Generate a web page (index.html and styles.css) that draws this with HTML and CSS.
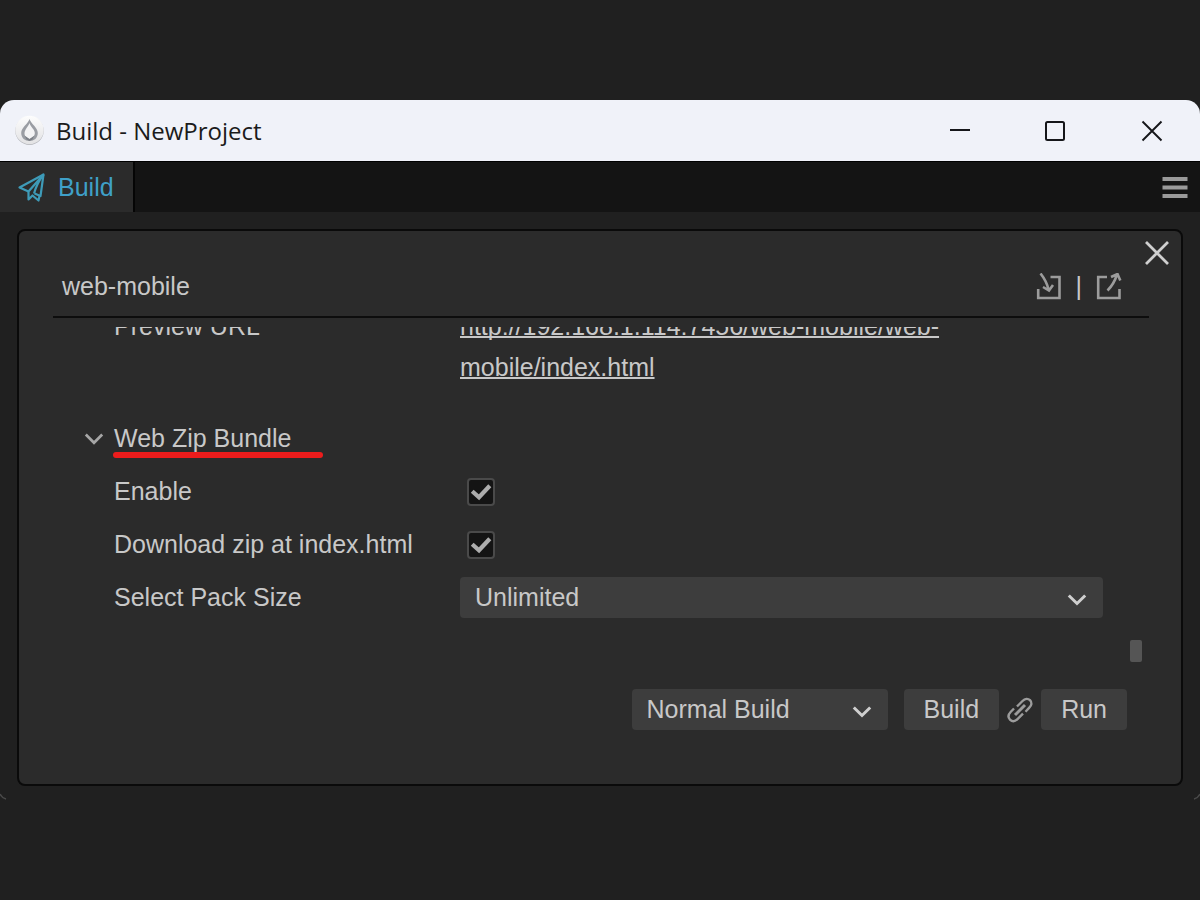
FILE: index.html
```html
<!DOCTYPE html>
<html lang="en">
<head>
<meta charset="utf-8">
<meta name="viewport" content="width=device-width, initial-scale=1">
<title>Build - NewProject</title>
<link rel="stylesheet" href="styles.css">
</head>
<body>
<div class="window">
  <header class="titlebar">
    <svg class="app-icon" width="32" height="32" viewBox="0 0 32 32" aria-hidden="true">
      <defs>
        <linearGradient id="disc" x1="0" y1="0" x2="0" y2="1"><stop offset="0" stop-color="#fdfdfd"/><stop offset="1" stop-color="#e2e2e4"/></linearGradient>
      </defs>
      <circle cx="15.500" cy="15.800" r="14.200" fill="#b4b6bb"/>
      <circle cx="15.500" cy="15" r="14.200" fill="url(#disc)"/>
      <path d="M15.500 4C14 9 7.200 12.600 7.200 18C7.200 23 11 26 15.500 26S23.800 23 23.800 18C23.800 12.600 17 9 15.500 4Z" fill="#9a9da3"/>
      <path d="M15.500 8C14.500 11.500 10.500 14.500 10.500 18.500C10.500 21.500 12.800 23.500 15.500 24C18.200 23.500 20.800 21.500 20.800 18C20.800 14.400 16.500 12 15.500 8Z" fill="#f3f3f4"/>
      <path d="M10.500 20.500L15.500 24L20.500 20.500L18.500 24.500L15.500 26L12.500 24.500Z" fill="#7c8087"/>
    </svg>
    <h1 class="title">Build - NewProject</h1>
    <div class="window-buttons">
      <button type="button" aria-label="Minimize"><svg width="24" height="24" viewBox="0 0 24 24"><path d="M2 11h20" stroke="#15161a" stroke-width="2"/></svg></button>
      <button type="button" aria-label="Maximize"><svg width="24" height="24" viewBox="0 0 24 24"><rect x="2" y="3" width="18" height="18" rx="1.500" fill="none" stroke="#15161a" stroke-width="2"/></svg></button>
      <button type="button" aria-label="Close window"><svg width="24" height="24" viewBox="0 0 24 24"><path d="M2.500 2.500l19 19M21.500 2.500l-19 19" stroke="#15161a" stroke-width="1.900"/></svg></button>
    </div>
  </header>

  <nav class="tabs">
    <button type="button" class="tab">
      <svg width="28" height="30" viewBox="0 0 28 30" fill="none" stroke="#3e9bb8" stroke-width="2.200" stroke-linejoin="round" aria-hidden="true">
        <path d="M10.500 19.500L1.500 15.500L25.500 2.500L22.500 24L16.500 21.500"/>
        <path d="M25.500 2.500L10.500 19.500V27.500L14.500 23.500L20.500 28.500L21.500 24"/>
        <path d="M25.500 2.500Q19 11 16 21.500"/>
      </svg>
      Build
    </button>
    <button type="button" class="menu" aria-label="Menu">
      <svg width="26" height="24" viewBox="0 0 26 24"><path d="M.5 4h25M.5 12.500h25M.5 21h25" stroke="#9a9a9a" stroke-width="4"/></svg>
    </button>
  </nav>

  <main class="content">
    <section class="card">
      <button type="button" class="close" aria-label="Close">
        <svg width="26" height="26" viewBox="0 0 26 26"><path d="M2 2l22 22M24 2L2 24" stroke="#cfcfcf" stroke-width="2.800"/></svg>
      </button>
      <div class="card-head">
        <h2 class="name">web-mobile</h2>
        <div class="transfer">
          <button type="button" aria-label="Import">
            <svg width="26" height="28" viewBox="0 0 26 28" fill="none" stroke="#9c9c9c" stroke-width="2.600"><path d="M14.500 4H23.500V25H2.200V16"/><path d="M4.500 .5Q10.500 8 12.500 16.500M7 14L13 17.500L17 12"/></svg>
          </button>
          <span class="bar">|</span>
          <button type="button" aria-label="Export">
            <svg width="26" height="28" viewBox="0 0 26 28" fill="none" stroke="#9c9c9c" stroke-width="2.600"><path d="M11 4H2.200V25H23.500V16"/><path d="M11.500 17.500Q18 11 20.800 2M15 4L21.500 1L24.300 7.500"/></svg>
          </button>
        </div>
      </div>

      <div class="scroller">
        <div class="row preview">
          <span class="label">Preview URL</span>
          <a class="link" href="#">http://192.168.1.114:7456/web-mobile/web-mobile/index.html</a>
        </div>
        <button type="button" class="group">
          <svg width="20" height="14" viewBox="0 0 20 14" aria-hidden="true"><path d="M1.800 2.500L10 10.800L18.200 2.500" fill="none" stroke="#a6a6a6" stroke-width="2.700"/></svg>
          <span class="group-name">Web Zip Bundle</span>
        </button>
        <div class="row">
          <label class="label" for="enable">Enable</label>
          <span class="check">
            <input type="checkbox" id="enable" checked>
            <svg width="22" height="18" viewBox="0 0 22 18" aria-hidden="true"><path d="M2.200 8.200L9 14.300L19.800 2.800" fill="none" stroke="#adadad" stroke-width="4.200"/></svg>
          </span>
        </div>
        <div class="row">
          <label class="label" for="download">Download zip at index.html</label>
          <span class="check">
            <input type="checkbox" id="download" checked>
            <svg width="22" height="18" viewBox="0 0 22 18" aria-hidden="true"><path d="M2.200 8.200L9 14.300L19.800 2.800" fill="none" stroke="#adadad" stroke-width="4.200"/></svg>
          </span>
        </div>
        <div class="row">
          <label class="label" for="pack">Select Pack Size</label>
          <span class="select">
            <select id="pack"><option>Unlimited</option></select>
            <svg width="20" height="14" viewBox="0 0 20 14" aria-hidden="true"><path d="M1.800 2.500L10 10.500L18.200 2.500" fill="none" stroke="#cfcfcf" stroke-width="3"/></svg>
          </span>
        </div>
        <span class="thumb"></span>
      </div>

      <footer class="actions">
        <span class="select mode">
          <select aria-label="Build mode"><option>Normal Build</option></select>
          <svg width="20" height="14" viewBox="0 0 20 14" aria-hidden="true"><path d="M1.800 2.500L10 10.500L18.200 2.500" fill="none" stroke="#cfcfcf" stroke-width="3"/></svg>
        </span>
        <button type="button" class="btn">Build</button>
        <svg class="chain" width="26" height="26" viewBox="0 0 26 26" fill="none" stroke="#9c9c9c" stroke-width="2.400" aria-hidden="true">
          <path d="M8 18L18 8" stroke-width="3"/>
          <path d="M10 9.500L15.500 4C18 1.500 21 1.300 23 3.200C25.200 5.400 24.800 8.200 22.300 10.700L18.500 14.800"/>
          <path d="M7 11.500L3.600 15C1.200 17.500 1 20.500 3 22.600C5.200 24.800 8 24.600 10.500 22.200L16 16.700"/>
        </svg>
        <button type="button" class="btn">Run</button>
      </footer>
    </section>
  </main>
  <svg class="corner left" width="8" height="8" viewBox="0 0 8 8" aria-hidden="true"><path d="M0 2Q2 6 6 7" fill="none" stroke="#4a4a4a" stroke-width="1.500"/></svg>
  <svg class="corner right" width="8" height="8" viewBox="0 0 8 8" aria-hidden="true"><path d="M8 2Q6 6 2 7" fill="none" stroke="#4a4a4a" stroke-width="1.500"/></svg>
</div>
</body>
</html>
```

FILE: styles.css
```css
* {
  box-sizing: border-box;
}

body {
  margin: 0;
  min-height: 100vh;
  display: flex;
  flex-direction: column;
  justify-content: center;
  background: #202020;
  color: #c8c8c8;
  font: 25px/41px "Liberation Sans", Arial, sans-serif;
}

button,
select {
  margin: 0;
  padding: 0;
  border: 0;
  background: none;
  color: inherit;
  font: inherit;
}

svg {
  display: block;
  flex: none;
}

.window {
  position: relative;
}

.titlebar {
  display: flex;
  align-items: center;
  height: 62px;
  padding-left: 14px;
  background: #f0f2f9;
  border-bottom: 1px solid #000000;
  border-radius: 14px 14px 0 0;
}

.title {
  flex: 1;
  margin: 0 0 0 10px;
  color: #1b1b1b;
  font: 24px/32px "Open Sans", "Noto Sans", sans-serif;
}

.window-buttons {
  display: flex;
}

.window-buttons button {
  display: grid;
  place-items: center;
  width: 96px;
  height: 60px;
}

.tabs {
  display: flex;
  justify-content: space-between;
  height: 50px;
  padding-right: 12px;
  background: #141414;
}

.tab {
  display: flex;
  align-items: center;
  gap: 12px;
  padding: 0 19px 0 18px;
  background: #2b2b2b;
  border-right: 2px solid #050505;
  color: #3fa0c8;
}

.content {
  padding: 17px 17px 14px;
}

.card {
  position: relative;
  padding: 32px 32px 54px 34px;
  background: #2b2b2b;
  border: 2px solid #0a0a0a;
  border-radius: 8px;
}

.close {
  position: absolute;
  top: 9px;
  right: 11px;
}

.card-head {
  display: flex;
  align-items: center;
  justify-content: space-between;
  height: 55px;
  padding: 0 27px 6px 9px;
  border-bottom: 2px solid #0d0d0d;
}

.name {
  margin: 0;
  font-size: 25px;
  font-weight: 400;
}

.transfer {
  display: flex;
  align-items: center;
  gap: 14px;
}

.scroller {
  position: relative;
  display: flex;
  flex-direction: column;
  gap: 12px;
  margin-top: 9px;
  padding: 0 46px 44px 61px;
  overflow: hidden;
}

.row {
  display: grid;
  grid-template-columns: 346px 1fr;
  align-items: center;
}

.preview {
  align-items: start;
  margin: -21px 0 18px;
}

.link {
  max-width: 500px;
  color: inherit;
  text-underline-offset: 1px;
  text-decoration-thickness: 2px;
  text-decoration-skip-ink: none;
}

.group {
  display: flex;
  align-items: center;
  gap: 10px;
  margin-left: -30px;
}

.group-name {
  position: relative;
}

.group-name::after {
  content: "";
  position: absolute;
  left: -1px;
  right: -32px;
  bottom: 1px;
  height: 6px;
  border-radius: 3px;
  background: #ec1c1c;
}

.check {
  display: grid;
  place-items: center start;
  height: 41px;
  padding-left: 7px;
}

.check > * {
  grid-area: 1 / 1;
}

.check input {
  appearance: none;
  width: 28px;
  height: 28px;
  margin: 0;
  background: #141414;
  border: 2px solid #4a4a4a;
  border-radius: 4px;
}

.check svg {
  margin-left: 3px;
  pointer-events: none;
}

.select {
  display: grid;
  align-items: center;
}

.select > * {
  grid-area: 1 / 1;
}

.select select {
  appearance: none;
  width: 100%;
  height: 41px;
  padding: 0 15px;
  background: #3d3d3d;
  border-radius: 4px;
}

.select svg {
  justify-self: end;
  margin: 4px 16px 0 0;
  pointer-events: none;
}

.thumb {
  position: absolute;
  right: 7px;
  bottom: 0;
  width: 12px;
  height: 22px;
  background: #555555;
  border-radius: 2px;
}

.actions {
  display: flex;
  align-items: center;
  justify-content: flex-end;
  margin-top: 27px;
  padding-right: 22px;
}

.mode {
  width: 256px;
  margin-right: 16px;
}

.btn {
  height: 41px;
  padding: 0 20px;
  background: #3d3d3d;
  border-radius: 4px;
}

.chain {
  margin: 0 8px;
}

.corner {
  position: absolute;
  bottom: 0;
}

.corner.left {
  left: 0;
}

.corner.right {
  right: 0;
}
```
